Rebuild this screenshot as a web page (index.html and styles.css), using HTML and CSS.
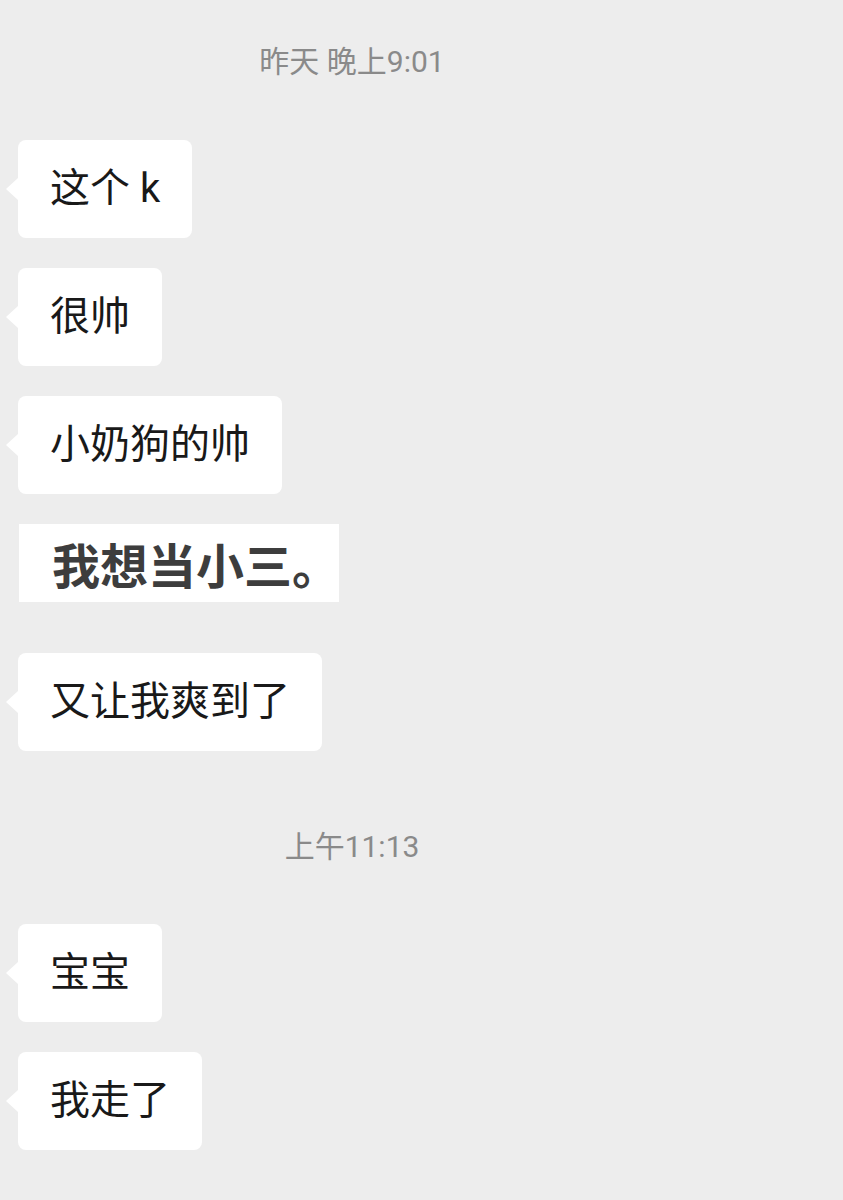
FILE: index.html
```html
<!DOCTYPE html>
<html lang="zh-CN">
<head>
    <meta charset="UTF-8">
    <meta name="viewport" content="width=device-width, initial-scale=1.0">
    <title>聊天记录</title>
    <link rel="stylesheet" href="styles.css">
</head>
<body>
    <div class="chat">
        <div class="time time-first">昨天 晚上9:01</div>

        <div class="bubble">这个 k</div>
        <div class="bubble">很帅</div>
        <div class="bubble">小奶狗的帅</div>
        <div class="sticker">我想当小三。</div>
        <div class="bubble">又让我爽到了</div>

        <div class="time time-second">上午11:13</div>

        <div class="bubble">宝宝</div>
        <div class="bubble">我走了</div>
    </div>
</body>
</html>
```

FILE: styles.css
```css
* {
    margin: 0;
    padding: 0;
    box-sizing: border-box;
}

body {
    font-family: Roboto, "Noto Sans CJK SC", sans-serif;
    background: #ededed;
    min-height: 100vh;
    color: #191919;
}

.chat {
    display: flex;
    flex-direction: column;
    align-items: flex-start;
    padding: 0 18px;
}

.time {
    width: 668px;
    text-align: center;
    font-size: 30px;
    line-height: 40px;
    color: #8a8a8a;
}

.time-first {
    margin-top: 42px;
    margin-bottom: 58px;
}

.time-second {
    margin-top: 46px;
    margin-bottom: 57px;
}

.bubble {
    position: relative;
    background: #fff;
    border-radius: 8px;
    padding: 24px 32px;
    font-size: 40px;
    line-height: 50px;
    margin-bottom: 30px;
}

.bubble::before {
    content: "";
    position: absolute;
    left: -12px;
    top: 50%;
    margin-top: -11px;
    border-style: solid;
    border-width: 11px 12px 11px 0;
    border-color: transparent #fff transparent transparent;
}

.sticker {
    margin-left: 1px;
    background: #fff;
    width: 320px;
    height: 78px;
    padding-left: 33px;
    font-family: "Noto Sans CJK SC", sans-serif;
    font-size: 48px;
    line-height: 78px;
    font-weight: bold;
    color: #3d3d3d;
    margin-bottom: 51px;
    white-space: nowrap;
}
```
